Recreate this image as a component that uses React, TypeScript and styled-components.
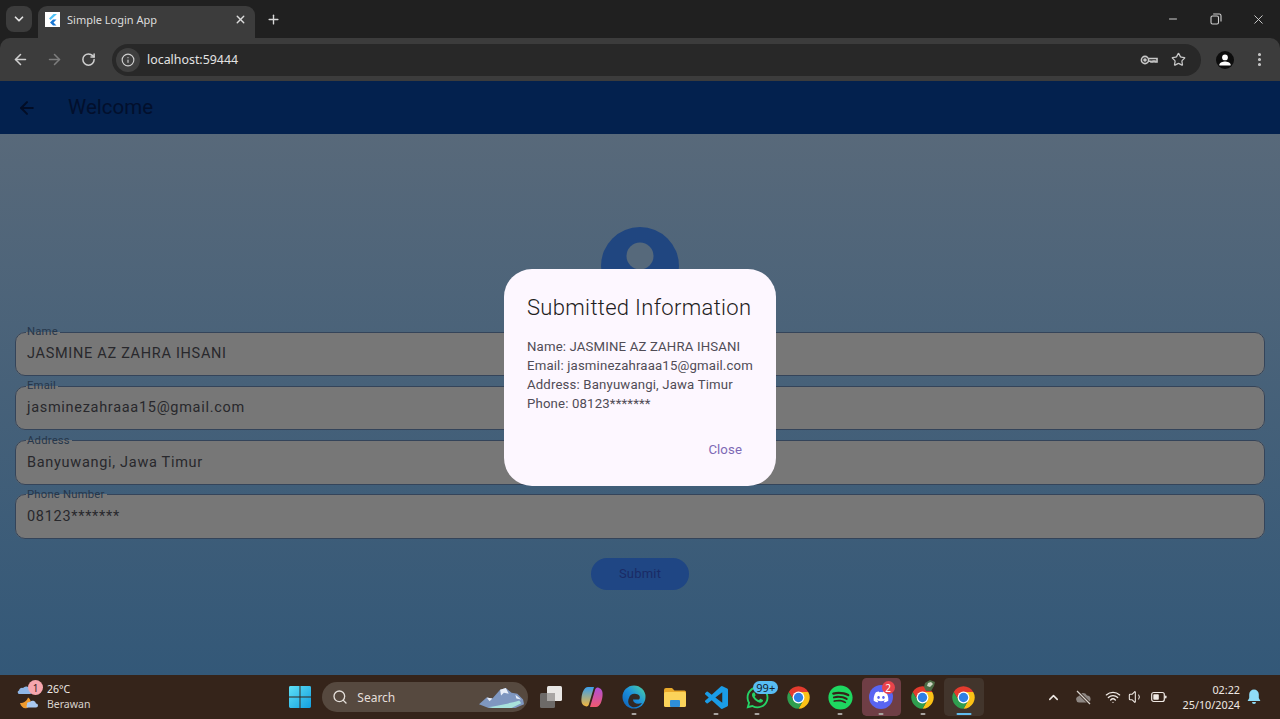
import React from "react";
import styled, { createGlobalStyle } from "styled-components";
import {
  ArrowLeft, ArrowRight, ChevronDown, ChevronUp, EllipsisVertical, Info, Minus, Plus,
  RotateCw, Search, Star, Volume1, Wifi, X,
} from "lucide-react";
import { FaDiscord, FaSpotify, FaWhatsapp } from "react-icons/fa";

const Global = createGlobalStyle`
  html, body { margin: 0; padding: 0; height: 100%; overflow: hidden; background: #202020; }
  #root { height: 100%; }
  * { box-sizing: border-box; }
`;

const uiFont = `"Noto Sans", "Open Sans", sans-serif`;
const appFont = `Roboto, "Liberation Sans", sans-serif`;

const Page = styled.div`
  height: 719px;
  display: flex;
  flex-direction: column;
`;

/* ---------- browser chrome ---------- */
const TabStrip = styled.div`
  height: 38px;
  flex: none;
  background: #202020;
  display: flex;
  align-items: flex-end;
  padding-left: 6px;
`;
const TabList = styled.div`
  width: 26px;
  height: 26px;
  margin-bottom: 6px;
  border-radius: 8px;
  background: #3c3c3c;
  color: #e3e3e3;
  display: flex;
  align-items: center;
  justify-content: center;
`;
const Tab = styled.div`
  width: 217px;
  height: 32px;
  margin-left: 6px;
  border-radius: 9px 9px 0 0;
  background: #3c3c3c;
  display: flex;
  align-items: center;
  padding: 0 8px 6px 7px;
  color: #dcdcdc;
  font: 11px ${uiFont};
`;
const Favicon = styled.div`
  width: 15px;
  height: 15px;
  background: #fff;
  margin-right: 7px;
  display: flex;
`;
const TabTitle = styled.span`
  flex: 1;
`;
const NewTab = styled.div`
  margin-left: 11px;
  margin-bottom: 11px;
  color: #d8d8d8;
  display: flex;
`;
const WindowButtons = styled.div`
  margin-left: auto;
  display: flex;
  align-self: flex-start;
  color: #d0d0d0;
`;
const WindowButton = styled.div`
  width: 43px;
  height: 38px;
  display: flex;
  align-items: center;
  justify-content: center;
`;
const Toolbar = styled.div`
  height: 43px;
  flex: none;
  background: #3c3c3c;
  border-radius: 10px 10px 0 0;
  display: flex;
  align-items: center;
  padding-left: 12px;
  color: #cfcfcf;
`;
const NavButton = styled.div<{ $dim?: boolean }>`
  width: 17px;
  display: flex;
  justify-content: center;
  margin-right: 17px;
  color: ${(p) => (p.$dim ? "#7d7d7d" : "#cfcfcf")};
`;
const Omnibox = styled.div`
  width: 1089px;
  height: 32px;
  margin-left: -2px;
  border-radius: 16px;
  background: #282828;
  display: flex;
  align-items: center;
  padding: 0 15px 0 4px;
`;
const InfoChip = styled.div`
  width: 24px;
  height: 24px;
  border-radius: 50%;
  background: #3f3f3f;
  display: flex;
  align-items: center;
  justify-content: center;
  margin-right: 7px;
`;
const Url = styled.span`
  flex: 1;
  color: #e3e3e3;
  font: 12.4px ${uiFont};
`;
const OmniIcon = styled.div<{ $gap: number }>`
  display: flex;
  margin-left: ${(p) => p.$gap}px;
  color: #c8c8c8;
`;
const Profile = styled.div`
  width: 18px;
  height: 18px;
  margin-left: 15px;
  border-radius: 50%;
  background: #0d0d0d;
  display: flex;
`;
const Kebab = styled.div`
  display: flex;
  margin-left: 17px;
  color: #c8c8c8;
`;

/* ---------- flutter app ---------- */
const AppBar = styled.div`
  height: 53px;
  flex: none;
  background: #03214e;
  display: flex;
  align-items: center;
  padding-left: 17px;
  color: #020d26;
`;
const AppTitle = styled.div`
  margin-left: 31px;
  margin-bottom: 2px;
  font: 20.5px ${appFont};
  color: #020f2c;
`;
const AppBody = styled.div`
  position: relative;
  flex: 1;
  min-height: 0;
  background: linear-gradient(180deg, #58697a 0%, #335878 100%);
  padding: 93px 15px 0;
  display: flex;
  flex-direction: column;
  align-items: stretch;
`;
const AvatarWrap = styled.div`
  display: flex;
  justify-content: center;
  height: 98px;
`;
const Field = styled.fieldset`
  margin: 0 0 3.33px;
  padding: 0 10px;
  height: 51px;
  border: 1.5px solid #34445a;
  border-radius: 10px;
  background: #777777;
  min-width: 0;
`;
const Legend = styled.legend`
  margin-left: 0;
  padding: 0 2px 0 1px;
  font: 11.3px/14px ${appFont};
  letter-spacing: 0.2px;
  color: #26364a;
`;
const Value = styled.div`
  font: 14.5px/22px ${appFont};
  letter-spacing: 0.7px;
  color: #28282c;
  margin-top: 4px;
  margin-left: 1px;
`;
const SubmitRow = styled.div`
  display: flex;
  justify-content: center;
  margin-top: 16px;
`;
const Submit = styled.div`
  width: 98px;
  height: 32px;
  border-radius: 16px;
  background: #1f4684;
  color: #1a2b66;
  font: 13px/32px ${appFont};
  letter-spacing: 0.2px;
  text-align: center;
`;
const Dialog = styled.div`
  position: absolute;
  left: 504px;
  top: 135px;
  width: 272px;
  height: 217px;
  border-radius: 28px;
  background: #fdf7ff;
  padding: 24px 23px 0;
  display: flex;
  flex-direction: column;
`;
const DialogTitle = styled.div`
  font-family: ${appFont};
  font-size: 22px;
  line-height: 30px;
  font-weight: 300;
  letter-spacing: 0.32px;
  color: #1f1d22;
  white-space: nowrap;
`;
const DialogBody = styled.div`
  margin-top: 15px;
  font: 13.2px/18.9px ${appFont};
  letter-spacing: 0.16px;
  color: #504c56;
  white-space: nowrap;
`;
const DialogActions = styled.div`
  margin-top: auto;
  margin-bottom: 27px;
  display: flex;
  justify-content: flex-end;
  padding-right: 11px;
  font: 13.2px/18px ${appFont};
  letter-spacing: 0.1px;
  color: #7d69b5;
`;

/* ---------- taskbar ---------- */
const Taskbar = styled.div`
  height: 44px;
  flex: none;
  background: #35241a;
  display: flex;
  align-items: center;
  color: #f1ece8;
  font: 10.5px ${uiFont};
`;
const Weather = styled.div`
  width: 279px;
  flex: none;
  display: flex;
  align-items: center;
  padding-left: 17px;
`;
const WeatherIcon = styled.div`
  position: relative;
  width: 24px;
  height: 28px;
  margin-right: 6px;
  display: flex;
`;
const Badge = styled.div<{ $bg: string; $color: string }>`
  position: absolute;
  display: flex;
  align-items: center;
  justify-content: center;
  border-radius: 8px;
  background: ${(p) => p.$bg};
  color: ${(p) => p.$color};
  font: 10px/1 ${uiFont};
`;
const WeatherBadge = styled(Badge)`
  left: 11px;
  top: -3px;
  width: 15px;
  height: 15px;
`;
const WhatsappBadge = styled(Badge)`
  left: 15.5px;
  top: 3px;
  width: 25px;
  height: 13px;
  font-size: 11px;
`;
const DiscordBadge = styled(Badge)`
  left: 20px;
  top: 3px;
  width: 13px;
  height: 13px;
`;
const WeatherText = styled.div`
  line-height: 15px;
`;
const Muted = styled.div`
  color: #d8d2cc;
`;
const Tiles = styled.div`
  display: flex;
  align-items: center;
`;
const Tile = styled.div<{ $bg?: string }>`
  position: relative;
  width: 41.3px;
  height: 38px;
  display: flex;
  align-items: center;
  justify-content: center;
  border: solid transparent;
  border-width: 0 1.6px;
  border-radius: 5px;
  background: ${(p) => p.$bg ?? "transparent"};
  background-clip: padding-box;
`;
const Dot = styled.span<{ $active?: boolean }>`
  position: absolute;
  bottom: 1px;
  left: 50%;
  transform: translateX(-50%);
  width: ${(p) => (p.$active ? 15 : 5)}px;
  height: 2.5px;
  border-radius: 2px;
  background: ${(p) => (p.$active ? "#62bdf0" : "#a9a4a0")};
`;
const SearchPill = styled.div`
  width: 206px;
  height: 30px;
  margin: 0 2px;
  border-radius: 15px;
  background: #56493f;
  display: flex;
  align-items: center;
  padding: 0 3px 0 10px;
  color: #e4dfda;
  font: 12px ${uiFont};
`;
const SearchLabel = styled.span`
  flex: 1;
  margin-left: 9px;
`;
const Tray = styled.div`
  margin-left: auto;
  display: flex;
  align-items: center;
  padding-right: 19px;
  color: #efe9e4;
`;
const TrayIcon = styled.div<{ $gap: number }>`
  display: flex;
  margin-right: ${(p) => p.$gap}px;
`;
const Clock = styled.div`
  text-align: right;
  font-size: 10.8px;
  line-height: 15px;
  margin-right: 7px;
  margin-left: 16px;
`;

/* ---------- drawings ---------- */
const ChromeLogo = () => (
  <svg width="27" height="27" viewBox="0 0 48 48">
    <path d="M24 14H41.32A20 20 0 0 0 6.68 14L15.34 29Z" fill="#e33b2e" />
    <path d="M41.32 14A20 20 0 0 1 24 44L32.66 29L24 14Z" fill="#fbc116" />
    <path d="M24 44A20 20 0 0 1 6.68 14L15.34 29L32.66 29Z" fill="#2f9e4f" />
    <circle cx="24" cy="24" r="10.5" fill="#fff" />
    <circle cx="24" cy="24" r="8.3" fill="#2f7fe6" />
  </svg>
);
const WindowsLogo = () => (
  <svg width="22" height="22" viewBox="0 0 23 23">
    <defs>
      <linearGradient id="win" x1="0" y1="0" x2="1" y2="1">
        <stop offset="0" stopColor="#5fe0f5" />
        <stop offset="1" stopColor="#129fe0" />
      </linearGradient>
    </defs>
    <path d="M0 1.5A1.5 1.5 0 0 1 1.5 0H11V11H0ZM12 0H21.5A1.5 1.5 0 0 1 23 1.5V11H12ZM0 12H11V23H1.5A1.5 1.5 0 0 1 0 21.5ZM12 12H23V21.5A1.5 1.5 0 0 1 21.5 23H12Z" fill="url(#win)" />
  </svg>
);
const Flutter = () => (
  <svg width="15" height="15" viewBox="0 0 15 15">
    <path d="M8.5 2H12L5.5 8 4 6.5Z" fill="#4fc3f7" />
    <path d="M8 7.5H11.5L8.5 10.5 11.5 13.5H8L5 10.5Z" fill="#1976d2" />
  </svg>
);
const KeyIcon = () => (
  <svg width="18" height="18" viewBox="0 0 18 18" fill="none" stroke="currentColor" strokeWidth="1.6">
    <circle cx="5" cy="9" r="3.6" />
    <circle cx="5" cy="9" r="1" fill="currentColor" />
    <path d="M8.6 7.5H17V11H15V10H13V11H11V10.3H8.6" />
  </svg>
);
const Person = () => (
  <svg width="18" height="18" viewBox="0 0 18 18" fill="#fff">
    <circle cx="9" cy="6.4" r="2.9" />
    <path d="M3.4 13.6C3.4 11.4 7 10.4 9 10.4S14.6 11.4 14.6 13.6V14.4H3.4Z" />
  </svg>
);
const Restore = () => (
  <svg width="12" height="12" viewBox="0 0 12 12" fill="none" stroke="currentColor" strokeWidth="1.1">
    <rect x="1" y="3" width="7.5" height="8" rx="1.5" />
    <path d="M3.2 1H9.3A1.7 1.7 0 0 1 11 2.7V8.6" />
  </svg>
);
const Avatar = () => (
  <svg width="78" height="78" viewBox="0 0 78 78">
    <circle cx="39" cy="39" r="39" fill="#204680" />
    <circle cx="39" cy="29" r="13.5" fill="#56697b" />
  </svg>
);
const WeatherArt = () => (
  <svg width="24" height="28" viewBox="0 0 24 28">
    <path d="M2 7.5A3 3 0 0 1 6 5A4 4 0 0 1 13 6.5A2.2 2.2 0 0 1 13 11H3A1.8 1.8 0 0 1 2 7.5Z" fill="#8fb6e6" />
    <path d="M3 20C7 20 10 18 11 14.5 15 17 15 23 10 25 7 26 4 24 3 20Z" fill="#ef9a2d" />
    <path d="M10 22A2.4 2.4 0 0 1 13 19A3.4 3.4 0 0 1 19 20.5 2 2 0 0 1 19 24.5H11A1.4 1.4 0 0 1 10 22Z" fill="#a9c8ef" />
  </svg>
);
const Mountains = () => (
  <svg width="46" height="23" viewBox="0 0 48 24">
    <path d="M0 19 8 12 14 13 22 4 28 2 34 7 40 8 46 14 47 19 38 23H10Z" fill="#7f97c0" />
    <path d="M22 4 28 2 31 8 26 7 23 10ZM8 12 14 13 11 16ZM38 9 44 14 39 13Z" fill="#e8eef8" />
    <path d="M10 22C22 20 28 19 42 15L44 18 34 23H14Z" fill="#a8e2dc" />
  </svg>
);
const TaskView = () => (
  <svg width="24" height="24" viewBox="0 0 24 24">
    <rect x="1" y="8" width="15" height="15" rx="1.5" fill="#6d6a68" />
    <rect x="8" y="1" width="15" height="15" rx="1.5" fill="#e9e7e5" />
    <rect x="8" y="8" width="8" height="8" fill="#a9a6a4" />
  </svg>
);
const Copilot = () => (
  <svg width="24" height="24" viewBox="0 0 24 24">
    <defs>
      <linearGradient id="co1" x1="0" y1="0" x2="0" y2="1">
        <stop offset="0" stopColor="#3aa0ec" />
        <stop offset="1" stopColor="#f4b63c" />
      </linearGradient>
      <linearGradient id="co2" x1="0" y1="0" x2="0" y2="1">
        <stop offset="0" stopColor="#b04fd8" />
        <stop offset="1" stopColor="#f0596f" />
      </linearGradient>
    </defs>
    <path d="M8 2H14L9 19C8.5 21 7 22 5 21 2 20 1 17 1.5 13 2 8 4 2 8 2Z" fill="url(#co1)" />
    <path d="M16 22H10L15 5C15.5 3 17 2 19 3 22 4 23 7 22.5 11 22 16 20 22 16 22Z" fill="url(#co2)" />
  </svg>
);
const Edge = () => (
  <svg width="24" height="24" viewBox="0 0 24 24">
    <defs>
      <linearGradient id="ed" x1="1" y1="0" x2="0" y2="1">
        <stop offset="0" stopColor="#4fd8a0" />
        <stop offset="0.5" stopColor="#1b8fdc" />
        <stop offset="1" stopColor="#0f5fb5" />
      </linearGradient>
    </defs>
    <circle cx="12" cy="12" r="11.5" fill="url(#ed)" />
    <path d="M7 13C8 9 12 8 16 9.5 18 10.5 18.5 13 17 14.5H11C11 18 15 20 20 18 17 22.5 11 23.5 8.5 21 5.5 19 6 15 7 13Z" fill="#35241a" opacity="0.95" />
  </svg>
);
const Folder = () => (
  <svg width="24" height="24" viewBox="0 0 24 24">
    <path d="M1 5A2 2 0 0 1 3 3H9L11.5 5.5H21.5A1.5 1.5 0 0 1 23 7V9H1Z" fill="#e9a92a" />
    <rect x="1" y="7" width="22" height="15" rx="1.5" fill="#fbd35a" />
    <rect x="7" y="15" width="10" height="7" rx="1" fill="#2f8fd8" />
  </svg>
);
const VSCode = () => (
  <svg width="23" height="23" viewBox="0 0 24 24" fill="#1a9ce6">
    <path d="M23.15 2.587L18.21.21a1.494 1.494 0 0 0-1.705.29l-9.46 8.63-4.12-3.128a.999.999 0 0 0-1.276.057L.327 7.261A1 1 0 0 0 .326 8.74L3.899 12 .326 15.26a1 1 0 0 0 .001 1.479L1.65 17.94a.999.999 0 0 0 1.276.057l4.12-3.128 9.46 8.63a1.492 1.492 0 0 0 1.704.29l4.942-2.377A1.5 1.5 0 0 0 24 20.06V3.939a1.5 1.5 0 0 0-.85-1.352zm-5.146 14.861L10.826 12l7.178-5.448v10.896z" />
  </svg>
);
const DiscordCircle = styled.div`
  width: 24px;
  height: 24px;
  border-radius: 50%;
  background: #5865f2;
  display: flex;
  align-items: center;
  justify-content: center;
  color: #fff;
`;
const SpriteOverlay = styled.svg`
  position: absolute;
  left: 19px;
  top: 1px;
`;
const CloudOff = () => (
  <svg width="17" height="17" viewBox="0 0 17 17">
    <path d="M4 13.5A3.2 3.2 0 0 1 3.6 7.2 4.6 4.6 0 0 1 12 6.4 3.6 3.6 0 0 1 12.8 13.5Z" fill="#8d8682" />
    <path d="M2 2 15 15" stroke="#35241a" strokeWidth="3" />
    <path d="M2 2 15 15" stroke="#d8d2cc" strokeWidth="1.2" />
  </svg>
);
const Battery = () => (
  <svg width="16" height="12" viewBox="0 0 16 12" fill="none">
    <rect x="0.7" y="1.5" width="12.6" height="9" rx="2" stroke="currentColor" strokeWidth="1.2" />
    <rect x="2.3" y="3.2" width="5.5" height="5.6" rx="0.8" fill="currentColor" />
    <rect x="14" y="4.5" width="1.5" height="3" rx="0.7" fill="currentColor" />
  </svg>
);
const Bell = () => (
  <svg width="14" height="16" viewBox="0 0 14 16" fill="#8fdcf7">
    <path d="M7 0.5A4.8 4.8 0 0 0 2.2 5.3V9L0.6 12H13.4L11.8 9V5.3A4.8 4.8 0 0 0 7 0.5Z" />
    <path d="M5 13H9A2 2 0 0 1 5 13Z" />
  </svg>
);

const fields = [
  ["Name", "JASMINE AZ ZAHRA IHSANI"],
  ["Email", "jasminezahraaa15@gmail.com"],
  ["Address", "Banyuwangi, Jawa Timur"],
  ["Phone Number", "08123*******"],
];

export default function App() {
  return (
    <Page>
      <Global />
      <TabStrip>
        <TabList><ChevronDown size={14} strokeWidth={3} /></TabList>
        <Tab>
          <Favicon><Flutter /></Favicon>
          <TabTitle>Simple Login App</TabTitle>
          <X size={13} strokeWidth={2.5} />
        </Tab>
        <NewTab><Plus size={15} strokeWidth={2.2} /></NewTab>
        <WindowButtons>
          <WindowButton><Minus size={12} /></WindowButton>
          <WindowButton><Restore /></WindowButton>
          <WindowButton><X size={15} strokeWidth={1.5} /></WindowButton>
        </WindowButtons>
      </TabStrip>
      <Toolbar>
        <NavButton><ArrowLeft size={17} strokeWidth={2.2} /></NavButton>
        <NavButton $dim><ArrowRight size={17} strokeWidth={2.2} /></NavButton>
        <NavButton><RotateCw size={15} strokeWidth={2.4} /></NavButton>
        <Omnibox>
          <InfoChip><Info size={14} strokeWidth={2} /></InfoChip>
          <Url>localhost:59444</Url>
          <OmniIcon $gap={0}><KeyIcon /></OmniIcon>
          <OmniIcon $gap={13}><Star size={15} strokeWidth={2} /></OmniIcon>
        </Omnibox>
        <Profile><Person /></Profile>
        <Kebab><EllipsisVertical size={17} strokeWidth={2.4} /></Kebab>
      </Toolbar>

      <AppBar>
        <ArrowLeft size={20} strokeWidth={2.4} />
        <AppTitle>Welcome</AppTitle>
      </AppBar>
      <AppBody>
        <AvatarWrap><Avatar /></AvatarWrap>
        {fields.map(([label, value]) => (
          <Field key={label}>
            <Legend>{label}</Legend>
            <Value>{value}</Value>
          </Field>
        ))}
        <SubmitRow><Submit>Submit</Submit></SubmitRow>
        <Dialog>
          <DialogTitle>Submitted Information</DialogTitle>
          <DialogBody>
            <div>Name: JASMINE AZ ZAHRA IHSANI</div>
            <div>Email: jasminezahraaa15@gmail.com</div>
            <div>Address: Banyuwangi, Jawa Timur</div>
            <div>Phone: 08123*******</div>
          </DialogBody>
          <DialogActions>Close</DialogActions>
        </Dialog>
      </AppBody>

      <Taskbar>
        <Weather>
          <WeatherIcon>
            <WeatherArt />
            <WeatherBadge $bg="#f7a6ad" $color="#3a1c1c">1</WeatherBadge>
          </WeatherIcon>
          <WeatherText>
            <div>26°C</div>
            <Muted>Berawan</Muted>
          </WeatherText>
        </Weather>
        <Tiles>
          <Tile><WindowsLogo /></Tile>
          <SearchPill>
            <Search size={16} strokeWidth={2} />
            <SearchLabel>Search</SearchLabel>
            <Mountains />
          </SearchPill>
          <Tile><TaskView /></Tile>
          <Tile><Copilot /></Tile>
          <Tile><Edge /><Dot /></Tile>
          <Tile><Folder /></Tile>
          <Tile><VSCode /><Dot /></Tile>
          <Tile>
            <FaWhatsapp size={25} color="#25d366" />
            <WhatsappBadge $bg="#58bdf4" $color="#11212c">99+</WhatsappBadge>
            <Dot />
          </Tile>
          <Tile><ChromeLogo /></Tile>
          <Tile><FaSpotify size={25} color="#1ed760" /><Dot /></Tile>
          <Tile $bg="#6f3e45">
            <DiscordCircle><FaDiscord size={16} /></DiscordCircle>
            <DiscordBadge $bg="#e8434b" $color="#fff">2</DiscordBadge>
            <Dot />
          </Tile>
          <Tile>
            <ChromeLogo />
            <SpriteOverlay width="15" height="15" viewBox="0 0 15 15">
              <path d="M3 4 8 1 13 3 12 7 9 12 4 12 2 8Z" fill="#4d6b45" />
              <path d="M6 4 9 3 11 5 8 8 5 7Z" fill="#cfd8c4" />
            </SpriteOverlay>
            <Dot />
          </Tile>
          <Tile $bg="#42352c"><ChromeLogo /><Dot $active /></Tile>
        </Tiles>
        <Tray>
          <TrayIcon $gap={14}><ChevronUp size={15} strokeWidth={2.4} /></TrayIcon>
          <TrayIcon $gap={13}><CloudOff /></TrayIcon>
          <TrayIcon $gap={7}><Wifi size={16} strokeWidth={2} /></TrayIcon>
          <TrayIcon $gap={7}><Volume1 size={16} strokeWidth={1.6} /></TrayIcon>
          <TrayIcon $gap={0}><Battery /></TrayIcon>
          <Clock>
            <div>02:22</div>
            <div>25/10/2024</div>
          </Clock>
          <Bell />
        </Tray>
      </Taskbar>
    </Page>
  );
}
